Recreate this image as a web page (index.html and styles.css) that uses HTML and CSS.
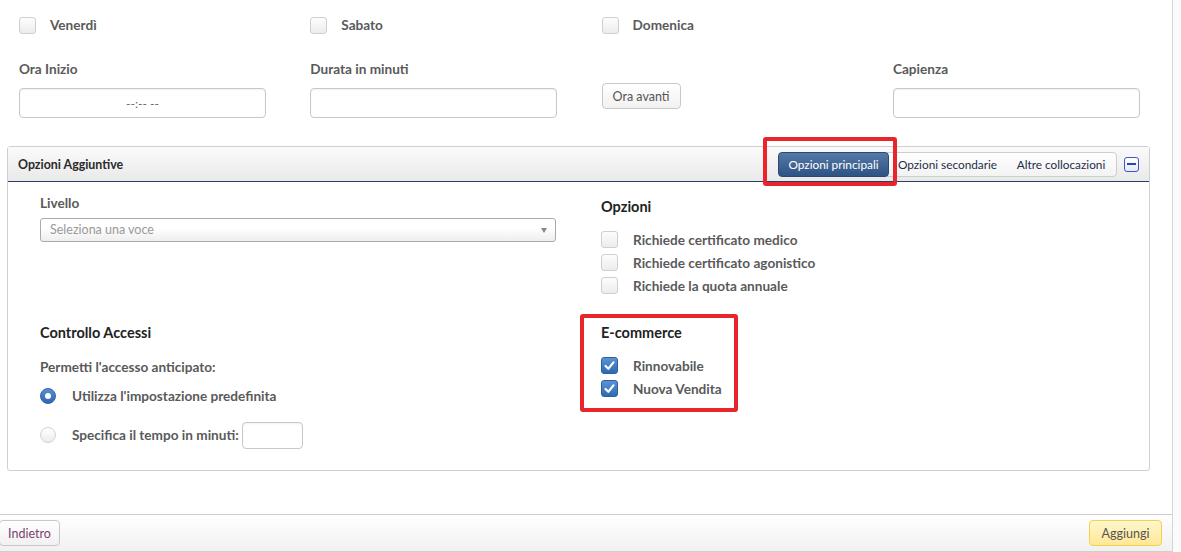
FILE: index.html
```html
<!DOCTYPE html>
<html lang="it">
<head>
  <meta charset="UTF-8" />
  <title>Nuova attività</title>
  <link rel="stylesheet" href="styles.css">
</head>
<body>

<div class="dialog">
  <div class="content">

    <div class="grid4 days">
      <label class="check"><span class="box"></span>Venerdì</label>
      <label class="check"><span class="box"></span>Sabato</label>
      <label class="check"><span class="box"></span>Domenica</label>
    </div>

    <div class="grid4 fields">
      <div class="field">
        <div class="field-label">Ora Inizio</div>
        <input class="text time" type="text" placeholder="--:-- --">
      </div>
      <div class="field">
        <div class="field-label">Durata in minuti</div>
        <input class="text" type="text">
      </div>
      <div class="field now">
        <button class="btn">Ora avanti</button>
      </div>
      <div class="field">
        <div class="field-label">Capienza</div>
        <input class="text" type="text">
      </div>
    </div>

    <div class="panel">
      <div class="panel-head">
        <span class="panel-title">Opzioni Aggiuntive</span>
        <div class="tabs">
          <button class="tab active">Opzioni principali</button>
          <button class="tab second">Opzioni secondarie</button>
          <button class="tab third">Altre collocazioni</button>
        </div>
        <span class="collapse"></span>
      </div>

      <div class="panel-body">
        <div class="cell">
          <div class="field-label">Livello</div>
          <div class="select">Seleziona una voce<span class="arrow"></span></div>
        </div>

        <div class="cell">
          <h3 class="heading">Opzioni</h3>
          <div class="list">
            <label class="check"><span class="box"></span>Richiede certificato medico</label>
            <label class="check"><span class="box"></span>Richiede certificato agonistico</label>
            <label class="check"><span class="box"></span>Richiede la quota annuale</label>
          </div>
        </div>

        <div class="cell">
          <h3 class="heading">Controllo Accessi</h3>
          <div class="sub-label">Permetti l'accesso anticipato:</div>
          <div class="radios">
            <label class="radio"><span class="dot on"></span>Utilizza l'impostazione predefinita</label>
            <label class="radio"><span class="dot"></span>Specifica il tempo in minuti:<input class="text minutes" type="text"></label>
          </div>
        </div>

        <div class="cell">
          <h3 class="heading">E-commerce</h3>
          <div class="list ecom">
            <label class="check"><span class="box checked"><svg viewBox="0 0 17 17"><path d="M4 9 L7.2 12.2 L13 5" /></svg></span>Rinnovabile</label>
            <label class="check"><span class="box checked"><svg viewBox="0 0 17 17"><path d="M4 9 L7.2 12.2 L13 5" /></svg></span>Nuova Vendita</label>
          </div>
        </div>
      </div>
    </div>

  </div>

  <div class="footer">
    <button class="btn back">Indietro</button>
    <button class="btn add">Aggiungi</button>
  </div>

  <!-- annotation marks -->
  <div class="mark mark-tabs"></div>
  <div class="mark mark-ecom"></div>
</div>

</body>
</html>
```

FILE: styles.css
```css
body {
  margin: 0;
  font-family: Lato, "Open Sans", sans-serif;
  font-size: 13.6px;
  color: #5a5a5a;
  background-color: #fbfbfb;
}
.dialog {
  position: relative;
  width: 1172px;
  height: 552px;
  background: white;
  border-right: 1px solid #d4d4d4;
  display: flex;
  flex-direction: column;
}
.content {
  flex: 1;
  padding: 12px 22px 0 7px;
}
.grid4 {
  display: grid;
  grid-template-columns: repeat(4, 247px);
  column-gap: 44.3px;
  padding-left: 12px;
}
.check {
  display: flex;
  align-items: center;
  height: 23px;
  font-weight: bold;
  color: #5a5a5a;
}
.days .check {
  height: 26px;
}
.days .check .box {
  margin-right: 14px;
}
.box {
  width: 15px;
  height: 15px;
  border: 1px solid #cfcfcf;
  border-radius: 3px;
  background: linear-gradient(#fdfdfd, #ececec);
  margin-right: 15px;
  flex: none;
}
.box.checked {
  border-color: #2d5f9f;
  background: linear-gradient(#5b93d6, #2f69b0);
}
.box svg {
  display: block;
  width: 15px;
  height: 15px;
}
.box svg path {
  fill: none;
  stroke: white;
  stroke-width: 2.4;
  stroke-linecap: round;
  stroke-linejoin: round;
}
.fields {
  margin-top: 23px;
}
.field-label {
  font-weight: bold;
  line-height: 16px;
  color: #5a5a5a;
}
.text {
  box-sizing: border-box;
  height: 30px;
  border: 1px solid #c8c8c8;
  border-radius: 4px;
  box-shadow: inset 0 1px 2px rgba(0,0,0,0.06);
  font-family: inherit;
  font-size: 12px;
  background: white;
}
.field .text {
  width: 247px;
  margin-top: 11px;
}
.time {
  text-align: center;
}
.time::placeholder {
  color: #666;
}
.now {
  padding-top: 22px;
}
.btn {
  height: 26px;
  padding: 0 10px;
  border: 1px solid #c8c8c8;
  border-radius: 4px;
  background: linear-gradient(#ffffff, #f1f1f1);
  font-family: inherit;
  font-size: 12.5px;
  color: #555;
}

.panel {
  margin-top: 28px;
  border: 1px solid #cfcfcf;
  border-radius: 3px;
}
.panel-head {
  display: flex;
  align-items: center;
  height: 34px;
  padding: 0 10px 0 10px;
  background: linear-gradient(#fafafa, #e9e9e9);
  border-bottom: 1px solid #233f63;
}
.panel-title {
  flex: 1;
  font-size: 12.4px;
  font-weight: bold;
  color: #2a2a2a;
}
.tabs {
  display: flex;
  height: 23px;
  border: 1px solid #cdcdcd;
  border-radius: 4px;
  background: linear-gradient(#ffffff, #f3f3f3);
}
.tab {
  border: none;
  background: none;
  padding: 0;
  font-family: inherit;
  font-size: 11.8px;
  color: #1e2e4a;
}
.tab.active {
  width: 111px;
  margin: -1px 0 -1px -1px;
  border: 1px solid #2a4a73;
  border-radius: 4px;
  background: linear-gradient(#557aa6, #2e5283);
  color: white;
}
.tab.second {
  width: 117px;
}
.tab.third {
  width: 110px;
}
.collapse {
  position: relative;
  box-sizing: border-box;
  width: 15px;
  height: 15px;
  margin-left: 7px;
  border: 1.5px solid #3b56c9;
  border-radius: 3px;
  background: linear-gradient(#ffffff, #e6eaf7);
}
.collapse::after {
  content: "";
  position: absolute;
  left: 2px;
  right: 2px;
  top: 5px;
  height: 2px;
  background: #2c45a8;
}

.panel-body {
  display: grid;
  grid-template-columns: 516px 1fr;
  column-gap: 45px;
  row-gap: 27px;
  padding: 13px 32px 22px 32px;
}
.select {
  position: relative;
  box-sizing: border-box;
  height: 24px;
  margin-top: 7px;
  padding-left: 9px;
  line-height: 22px;
  border: 1px solid #aaa;
  border-radius: 3px;
  background: linear-gradient(#ffffff 40%, #eeeeee);
  font-size: 12.5px;
  color: #999;
}
.arrow {
  position: absolute;
  right: 8px;
  top: 9px;
  border-left: 3.5px solid transparent;
  border-right: 3.5px solid transparent;
  border-top: 5px solid #888;
}
.heading {
  margin: 3px 0 0;
  font-size: 14.5px;
  line-height: 18px;
  font-weight: bold;
  color: #222;
}
.list {
  margin-top: 12px;
}
.cell:nth-child(3) .heading,
.cell:nth-child(4) .heading {
  margin-top: 0;
}
.sub-label {
  margin-top: 17px;
  line-height: 16px;
  font-weight: bold;
}
.radios {
  display: flex;
  flex-direction: column;
  gap: 13px;
  margin-top: 8px;
}
.radio {
  display: flex;
  align-items: center;
  height: 26px;
  font-weight: bold;
}
.dot {
  position: relative;
  box-sizing: border-box;
  width: 16px;
  height: 16px;
  margin-right: 16px;
  border: 1px solid #d2d2d2;
  border-radius: 50%;
  background: linear-gradient(#ffffff, #ececec);
}
.dot.on {
  border-color: #2d62a8;
  background: linear-gradient(#5a91d4, #2e66ae);
}
.dot.on::after {
  content: "";
  position: absolute;
  left: 4px;
  top: 4px;
  width: 6px;
  height: 6px;
  border-radius: 50%;
  background: white;
}
.minutes {
  width: 61px;
  height: 27px;
  margin-left: 3px;
}

.footer {
  display: flex;
  justify-content: space-between;
  align-items: center;
  height: 36px;
  padding: 0 10px 0 0;
  border-top: 1px solid #cfcfcf;
  border-bottom: 1px solid #cfcfcf;
  background: linear-gradient(#ffffff, #f1f1f1);
}
.back {
  margin-left: -1px;
  padding: 0 8px;
  color: #7c3f6f;
}
.add {
  width: 73px;
  border-color: #f3d14a;
  background: linear-gradient(#fff6cc, #ffe896);
}

.mark {
  position: absolute;
  border: 4px solid #e8252b;
  border-radius: 3px;
}
.mark-tabs {
  left: 763px;
  top: 137px;
  width: 126px;
  height: 41px;
}
.mark-ecom {
  left: 580px;
  top: 314px;
  width: 150px;
  height: 90px;
}
```
